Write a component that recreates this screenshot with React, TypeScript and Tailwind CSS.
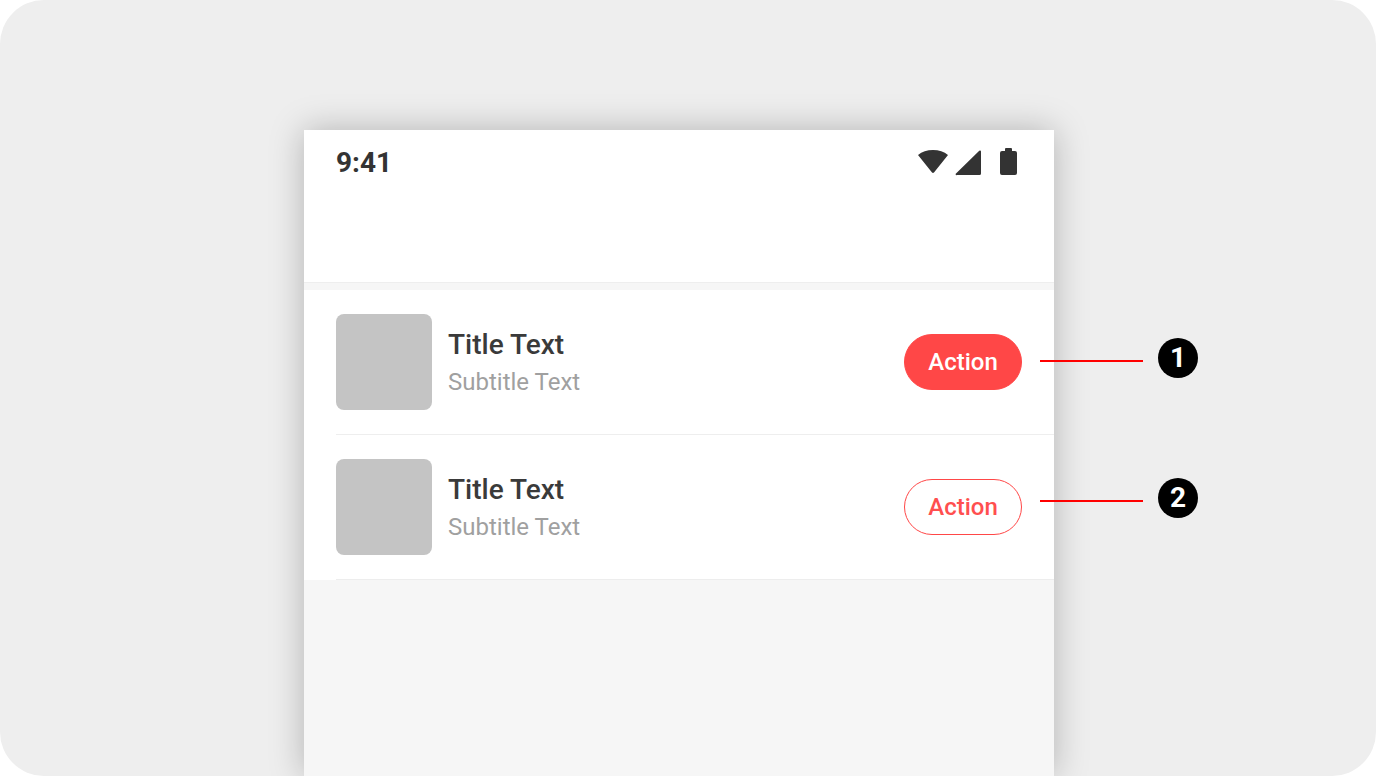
const Row = ({ solid, last }: { solid?: boolean; last?: boolean }) => (
  <div className="pl-8 bg-white">
    <div className={"flex items-center h-[145px] pr-8 border-b " + (last ? "border-[#ededed]" : "border-[#eeeeee]")}>
      <div className="w-24 h-24 rounded-lg bg-[#c4c4c4] shrink-0" />
      <div className="ml-4 flex-1 pt-0.5">
        <div className="text-[28px] leading-[38px] font-medium text-[#3a3a3a]">Title Text</div>
        <div className="text-[24px] leading-[36px] text-[#a0a0a0]">Subtitle Text</div>
      </div>
      <button
        className={
          "w-[118px] h-14 rounded-full text-[24px] font-medium border " +
          (solid ? "bg-[#ff4747] border-[#ff4747] text-white" : "bg-white border-[#ff4747] text-[#ff4f4f]")
        }
      >
        Action
      </button>
    </div>
  </div>
);

const Callout = ({ n, className }: { n: number; className: string }) => (
  <div className={"absolute left-[1040px] flex items-center " + className}>
    <div className="w-[103px] h-0.5 bg-[#ff0000] mt-1.5" />
    <div className="ml-[15px] w-10 h-10 rounded-full bg-black text-white flex items-center justify-center text-[28px] font-bold">
      {n}
    </div>
  </div>
);

export default function App() {
  return (
    <div className="relative w-[1376px] h-[776px] overflow-hidden bg-white font-['Roboto',sans-serif]">
      <div className="w-full h-full rounded-[44px] bg-[#eeeeee] pl-[304px] pt-[130px] overflow-hidden">
        <div className="w-[750px] h-[646px] bg-[#f6f6f6] shadow-[0_0_32px_rgba(0,0,0,0.25)]">
          <div className="h-[153px] bg-white border-b border-[#eeeeee] px-8 pt-3.5 flex justify-between items-start">
            <span className="text-[28px] leading-[38px] font-bold text-[#333333]">9:41</span>
            <svg width="106" height="32" viewBox="0 0 106 32" className="mt-0.5" fill="#333333">
              <path d="M2 9C6 5.800 11 4 17 4s11 1.800 15 5L18.200 26.200a1.500 1.500 0 0 1-2.400 0Z" />
              <path d="M40 27.500 63 5a1.100 1.100 0 0 1 2 .8V27.500A1.500 1.500 0 0 1 63.500 29H41a.8.8 0 0 1-1-1.500Z" />
              <path d="M90 2h5a1 1 0 0 1 1 1v2h3A2 2 0 0 1 101 7v20a2 2 0 0 1-2 2H86a2 2 0 0 1-2-2V7a2 2 0 0 1 2-2h3V3a1 1 0 0 1 1-1Z" />
            </svg>
          </div>
          <div className="h-[7px]" />
          <Row solid />
          <Row last />
        </div>
      </div>
      <Callout n={1} className="top-[338px]" />
      <Callout n={2} className="top-[478px]" />
    </div>
  );
}
